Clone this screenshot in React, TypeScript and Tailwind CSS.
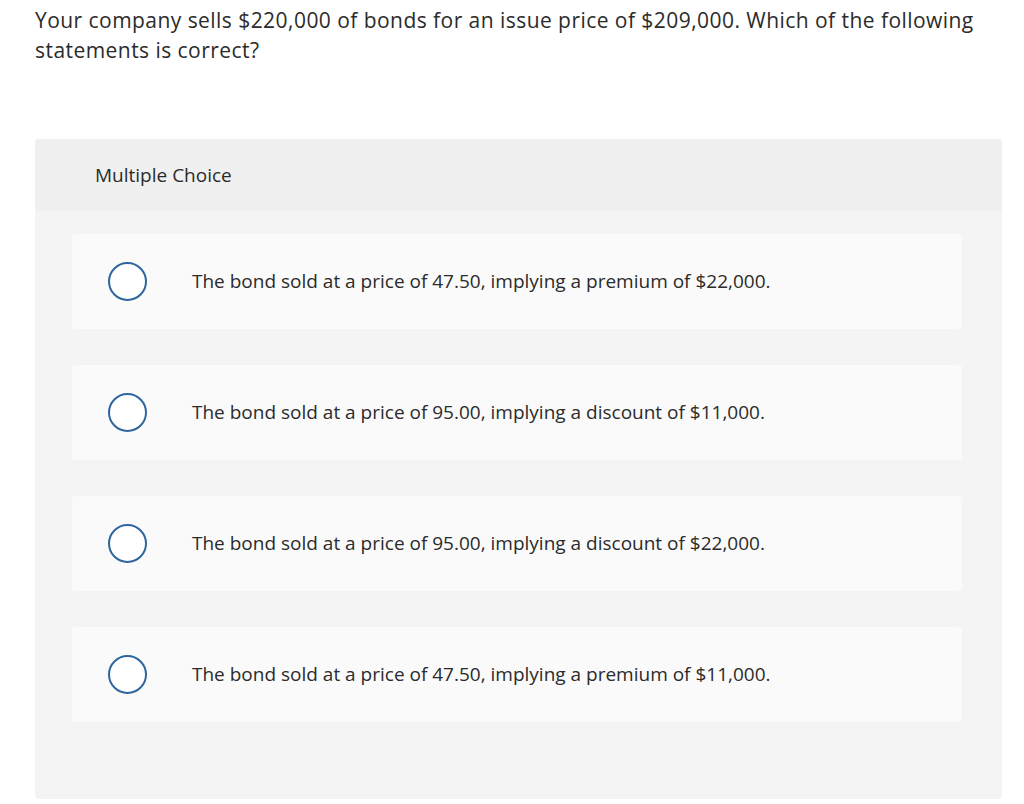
import React from "react";

const options = [
  "The bond sold at a price of 47.50, implying a premium of $22,000.",
  "The bond sold at a price of 95.00, implying a discount of $11,000.",
  "The bond sold at a price of 95.00, implying a discount of $22,000.",
  "The bond sold at a price of 47.50, implying a premium of $11,000.",
];

export default function App() {
  return (
    <div
      className="w-[1024px] h-[804px] bg-white text-[#2b2b2b] overflow-hidden"
      style={{ fontFamily: "'Open Sans', sans-serif" }}
    >
      <div className="pl-[35px] pr-[40px] pt-[5px] text-[21px] leading-[30px] tracking-[0.45px]">
        Your company sells $220,000 of bonds for an issue price of $209,000. Which of the following statements is correct?
      </div>
      <div className="ml-[35px] mt-[74px] w-[967px] h-[660px] rounded-[4px] bg-[#f4f4f4] flex flex-col overflow-hidden">
        <div className="h-[72px] bg-[#f0f0f0] flex items-center pl-[60px] text-[19px] shrink-0">
          Multiple Choice
        </div>
        <div className="flex flex-col gap-[36px] pt-[23px] pl-[37px] pr-[40px]">
          {options.map((o, i) => (
            <div
              key={i}
              className="h-[95px] rounded-[4px] bg-[#fafafa] flex items-center pl-[36px]"
            >
              <div className="w-[39px] h-[39px] rounded-full border-2 border-[#2d669e] bg-white shrink-0" />
              <div className="ml-[45px] text-[19px]">{o}</div>
            </div>
          ))}
        </div>
      </div>
    </div>
  );
}
